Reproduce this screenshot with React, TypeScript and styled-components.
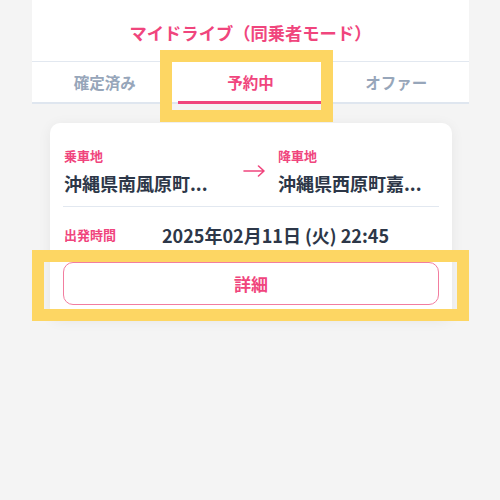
import React from "react";
import styled, { createGlobalStyle } from "styled-components";

const COLORS = {
  PINK: "#f0457d",
  PINK_BORDER: "#f27d9f",
  TEXT: "#2d3748",
  GREY_TEXT: "#97a6ba",
  LINE: "#e2e8f0",
  PAGE: "#f4f4f4",
  YELLOW: "#fdd663",
};

const GlobalStyle = createGlobalStyle`
  body {
    margin: 0;
    background-color: ${COLORS.PAGE};
    font-family: "Noto Sans CJK JP", "Noto Sans", sans-serif;
  }
`;

const StyledPage = styled.div`
  position: relative;
  width: 500px;
  min-height: 500px;
`;

const StyledPanel = styled.div`
  width: 437px;
  margin-left: 32px;
`;

const StyledHeader = styled.header`
  display: flex;
  align-items: center;
  justify-content: center;
  height: 61px;
  box-sizing: border-box;
  padding-top: 4px;
  background-color: #fff;

  h1 {
    margin: 0;
    font-size: 17.3px;
    font-weight: 700;
    color: ${COLORS.PINK};
  }
`;

const StyledTabs = styled.nav`
  display: grid;
  grid-template-columns: repeat(3, 1fr);
  height: 43px;
  box-sizing: border-box;
  background-color: #fff;
  border-top: 1px solid ${COLORS.LINE};
  border-bottom: 2px solid #dfe6ef;
`;

const StyledTab = styled.div<{ $active?: boolean }>`
  position: relative;
  display: flex;
  align-items: center;
  justify-content: center;
  font-size: 15.5px;
  font-weight: 700;
  color: ${({ $active }) => ($active ? COLORS.PINK : COLORS.GREY_TEXT)};

  &::after {
    content: "";
    display: ${({ $active }) => ($active ? "block" : "none")};
    position: absolute;
    left: 0;
    right: 2px;
    bottom: -2px;
    height: 3px;
    background-color: ${COLORS.PINK};
  }
`;

const StyledCard = styled.section`
  width: 402px;
  margin: 19px 0 0 18px;
  box-sizing: border-box;
  padding: 24px 13px 14px;
  background-color: #fff;
  border-radius: 10px;
  box-shadow: 0 2px 14px rgba(0, 0, 0, 0.06);
`;

const StyledRoute = styled.div`
  display: flex;
  align-items: flex-start;
  padding: 0 1px 10px;
  border-bottom: 1px solid ${COLORS.LINE};
`;

const StyledStop = styled.div<{ $width?: number }>`
  display: flex;
  flex-direction: column;
  gap: 5px;
  width: ${({ $width }) => ($width ? `${$width}px` : "auto")};
  flex: ${({ $width }) => ($width ? "none" : "1")};
`;

const StyledLabel = styled.span`
  font-size: 13px;
  line-height: 18px;
  font-weight: 700;
  color: ${COLORS.PINK};
`;

const StyledPlace = styled.span`
  font-size: 18px;
  line-height: 26px;
  font-weight: 700;
  color: ${COLORS.TEXT};
  white-space: nowrap;
`;

const StyledArrow = styled.div`
  display: flex;
  justify-content: center;
  width: 49px;
  padding-top: 18px;
`;

const StyledTimeRow = styled.div`
  display: flex;
  align-items: center;
  margin-top: 15px;
  padding-left: 1px;

  ${StyledLabel} {
    width: 98px;
  }
`;

const StyledButton = styled.button`
  display: flex;
  align-items: center;
  justify-content: center;
  width: 100%;
  height: 43px;
  margin-top: 14px;
  background-color: #fff;
  border: 1.5px solid ${COLORS.PINK_BORDER};
  border-radius: 10px;
  font-family: inherit;
  font-size: 17px;
  font-weight: 700;
  color: ${COLORS.PINK};
  cursor: pointer;
`;

const StyledHighlight = styled.div<{
  $left: number;
  $top: number;
  $width: number;
  $height: number;
}>`
  position: absolute;
  left: ${({ $left }) => $left}px;
  top: ${({ $top }) => $top}px;
  width: ${({ $width }) => $width}px;
  height: ${({ $height }) => $height}px;
  box-sizing: border-box;
  border: 12px solid ${COLORS.YELLOW};
  pointer-events: none;
`;

const Arrow = () => (
  <svg width="22" height="12" viewBox="0 0 22 12" fill="none">
    <path
      d="M1 6H21M15.5 1L21 6L15.5 11"
      stroke={COLORS.PINK}
      strokeWidth="1.6"
      strokeLinecap="round"
      strokeLinejoin="round"
    />
  </svg>
);

const TABS = ["確定済み", "予約中", "オファー"];

const App = () => {
  return (
    <StyledPage>
      <GlobalStyle />
      <StyledPanel>
        <StyledHeader>
          <h1>マイドライブ（同乗者モード）</h1>
        </StyledHeader>
        <StyledTabs>
          {TABS.map((tab) => (
            <StyledTab key={tab} $active={tab === "予約中"}>
              {tab}
            </StyledTab>
          ))}
        </StyledTabs>
        <StyledCard>
          <StyledRoute>
            <StyledStop $width={165}>
              <StyledLabel>乗車地</StyledLabel>
              <StyledPlace>沖縄県南風原町...</StyledPlace>
            </StyledStop>
            <StyledArrow>
              <Arrow />
            </StyledArrow>
            <StyledStop>
              <StyledLabel>降車地</StyledLabel>
              <StyledPlace>沖縄県西原町嘉...</StyledPlace>
            </StyledStop>
          </StyledRoute>
          <StyledTimeRow>
            <StyledLabel>出発時間</StyledLabel>
            <StyledPlace>2025年02月11日 (火) 22:45</StyledPlace>
          </StyledTimeRow>
          <StyledButton>詳細</StyledButton>
        </StyledCard>
      </StyledPanel>
      <StyledHighlight $left={160} $top={50} $width={173} $height={72} />
      <StyledHighlight $left={32} $top={250} $width={437} $height={71} />
    </StyledPage>
  );
};

export default App;
